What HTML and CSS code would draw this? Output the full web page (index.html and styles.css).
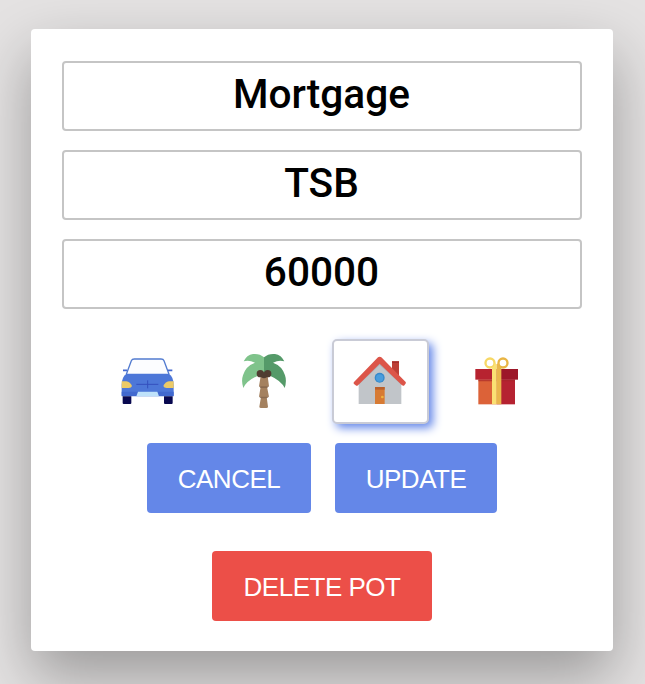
FILE: index.html
```html
<!DOCTYPE html>
<html lang="en">
<head>
<meta charset="utf-8">
<title>Edit pot</title>
<link rel="stylesheet" href="styles.css">
</head>
<body>
<form class="card">
  <input class="field" type="text" value="Mortgage" aria-label="Pot name">
  <input class="field" type="text" value="TSB" aria-label="Bank">
  <input class="field" type="text" value="60000" aria-label="Amount">
  <div class="options">
    <div class="option">
      <svg viewBox="-28 -12 279 243">
        <path d="M48 88L63 47Q65 42 72 42H152Q159 42 161 47L176 88" fill="#fcfdff" stroke="#527bd0" stroke-width="4"/>
        <path d="M38 76H50M173 76H186" stroke="#4569cf" stroke-width="5"/>
        <path d="M48 86H176Q190 96 190 120V152H34V120Q34 96 48 86Z" fill="#4d77d8"/>
        <path d="M34 140H190V154H34Z" fill="#4169cf"/>
        <path d="M34 109H48Q60 111 65 123Q63 129 55 129H34Z" fill="#ecca67"/>
        <path d="M190 109H176Q164 111 159 123Q161 129 169 129H190Z" fill="#ecca67"/>
        <path d="M78 118H144M112 106V130" stroke="#3450bd" stroke-width="3"/>
        <path d="M83 140H141L146 154H78Z" fill="#bfe2fa"/>
        <path d="M37 154H63V174Q63 177 60 177H40Q37 177 37 174ZM161 154H187V174Q187 177 184 177H164Q161 177 161 174Z" fill="#08084f"/>
      </svg>
    </div>
    <div class="option">
      <svg viewBox="-40 -12 279 243">
        <path d="M91 94H112L116 124L110 125L116 155L109 156L113 185Q113 189 108 189H92Q87 189 87 185L92 156L86 155L91 125L86 124Z" fill="#a4815f"/>
        <path d="M86 124H116L110 129H91ZM86 155H116L109 160H92Z" fill="#8a6b50"/>
        <path d="M101 37Q88 25 68 27Q49 30 40 49Q56 44 74 53Q46 63 38 91Q32 108 39 129Q49 107 83 92L101 87Z" fill="#7fc38b"/>
        <path d="M101 37Q114 25 134 27Q153 30 162 49Q146 44 128 53Q156 63 164 91Q170 108 163 129Q153 107 119 92L101 87Z" fill="#559a69"/>
        <circle cx="90" cy="86" r="11" fill="#503d31"/>
        <circle cx="112" cy="86" r="11" fill="#503d31"/>
        <circle cx="101" cy="91" r="9" fill="#503d31"/>
      </svg>
    </div>
    <div class="option selected">
      <svg viewBox="27 33 279 243">
        <path d="M201 94H222V139L201 121Z" fill="#bd4037"/>
        <path d="M201 94H222V99H201Z" fill="#a72e2b"/>
        <path d="M101 154L164 94L229 154V222H101Z" fill="#c1c5c9"/>
        <path d="M101 154L164 97L229 154V164L164 105L101 164Z" fill="#adb2b7"/>
        <path d="M164 80Q167 80 169 82L242 156Q244 159 241 162L237 167Q234 168 231 166L164 101L99 166Q95 169 92 166L87 162Q84 159 87 156L159 82Q161 80 164 80Z" fill="#dc5549"/>
        <circle cx="164" cy="143" r="15" fill="#3589cb"/>
        <circle cx="164" cy="144" r="11" fill="#489ddd"/>
        <path d="M150 171H179V222H150Z" fill="#d77b34"/>
        <path d="M150 171H179V179H150Z" fill="#bb602b"/>
        <circle cx="172" cy="201" r="4" fill="#f0b53f"/>
      </svg>
    </div>
    <div class="option">
      <svg viewBox="-36 -12 279 243">
        <path d="M49 103H104V178H49Z" fill="#dc6238"/>
        <path d="M104 103H159V178H104Z" fill="#b52231"/>
        <path d="M40 72H104V104H40Z" fill="#b72330"/>
        <path d="M104 72H168V104H104Z" fill="#9c1729"/>
        <path d="M49 104H159V109H49Z" fill="#a62529" opacity=".65"/>
        <circle cx="84" cy="54" r="13.5" fill="none" stroke="#f7d865" stroke-width="7"/>
        <circle cx="123" cy="54" r="13.5" fill="none" stroke="#e9b544" stroke-width="7"/>
        <path d="M90 68Q98 63 98 53L104 58V178H90Z" fill="#fae174"/>
        <path d="M118 68Q110 63 110 53L104 58V178H118Z" fill="#e9b74d"/>
      </svg>
    </div>
  </div>
  <div class="actions">
    <button class="button cancel" type="button">CANCEL</button>
    <button class="button update" type="button">UPDATE</button>
  </div>
  <button class="button delete" type="button">DELETE POT</button>
</form>
</body>
</html>
```
FILE: styles.css
```css
* {
  box-sizing: border-box;
}

body {
  margin: 0;
  height: 684px;
  padding: 29px 32px 0 31px;
  overflow: hidden;
  background: #e4e2e2;
}

.card {
  display: flex;
  flex-direction: column;
  align-items: center;
  height: 622px;
  padding: 31.6px 31px 0;
  border-radius: 4px;
  background: #fff;
  box-shadow: 0 26px 60px rgba(0, 0, 0, 0.32);
}

.field {
  display: block;
  flex: none;
  width: 520px;
  height: 70px;
  margin: 0 0 19.25px;
  padding: 0 1px 4px 0;
  border: 2px solid #c5c5c5;
  border-radius: 4px;
  outline: none;
  background: #fff;
  color: #000;
  font: 500 40.6px Roboto, sans-serif;
  text-align: center;
}

.options {
  display: flex;
  gap: 19.6px;
  margin-top: 10.65px;
}

.option {
  width: 97px;
  height: 85px;
  border: 2px solid transparent;
  border-radius: 5px;
}

.option svg {
  display: block;
  width: 93px;
  height: 81px;
}

.selected {
  border-color: #c9cbd6;
  background: #fff;
  box-shadow: 4px 4px 10px #6487e9;
}

.actions {
  display: flex;
  gap: 24px;
  margin-top: 19px;
}

.button {
  height: 70px;
  padding: 3px 0 0;
  border: 0;
  border-radius: 4px;
  background: #6487e8;
  color: #fff;
  font: 26px "Liberation Sans", Arial, sans-serif;
  letter-spacing: -0.5px;
}

.cancel {
  width: 164px;
}

.update {
  width: 162px;
}

.delete {
  width: 220px;
  margin-top: 38px;
  background: #ec4f48;
}
```
